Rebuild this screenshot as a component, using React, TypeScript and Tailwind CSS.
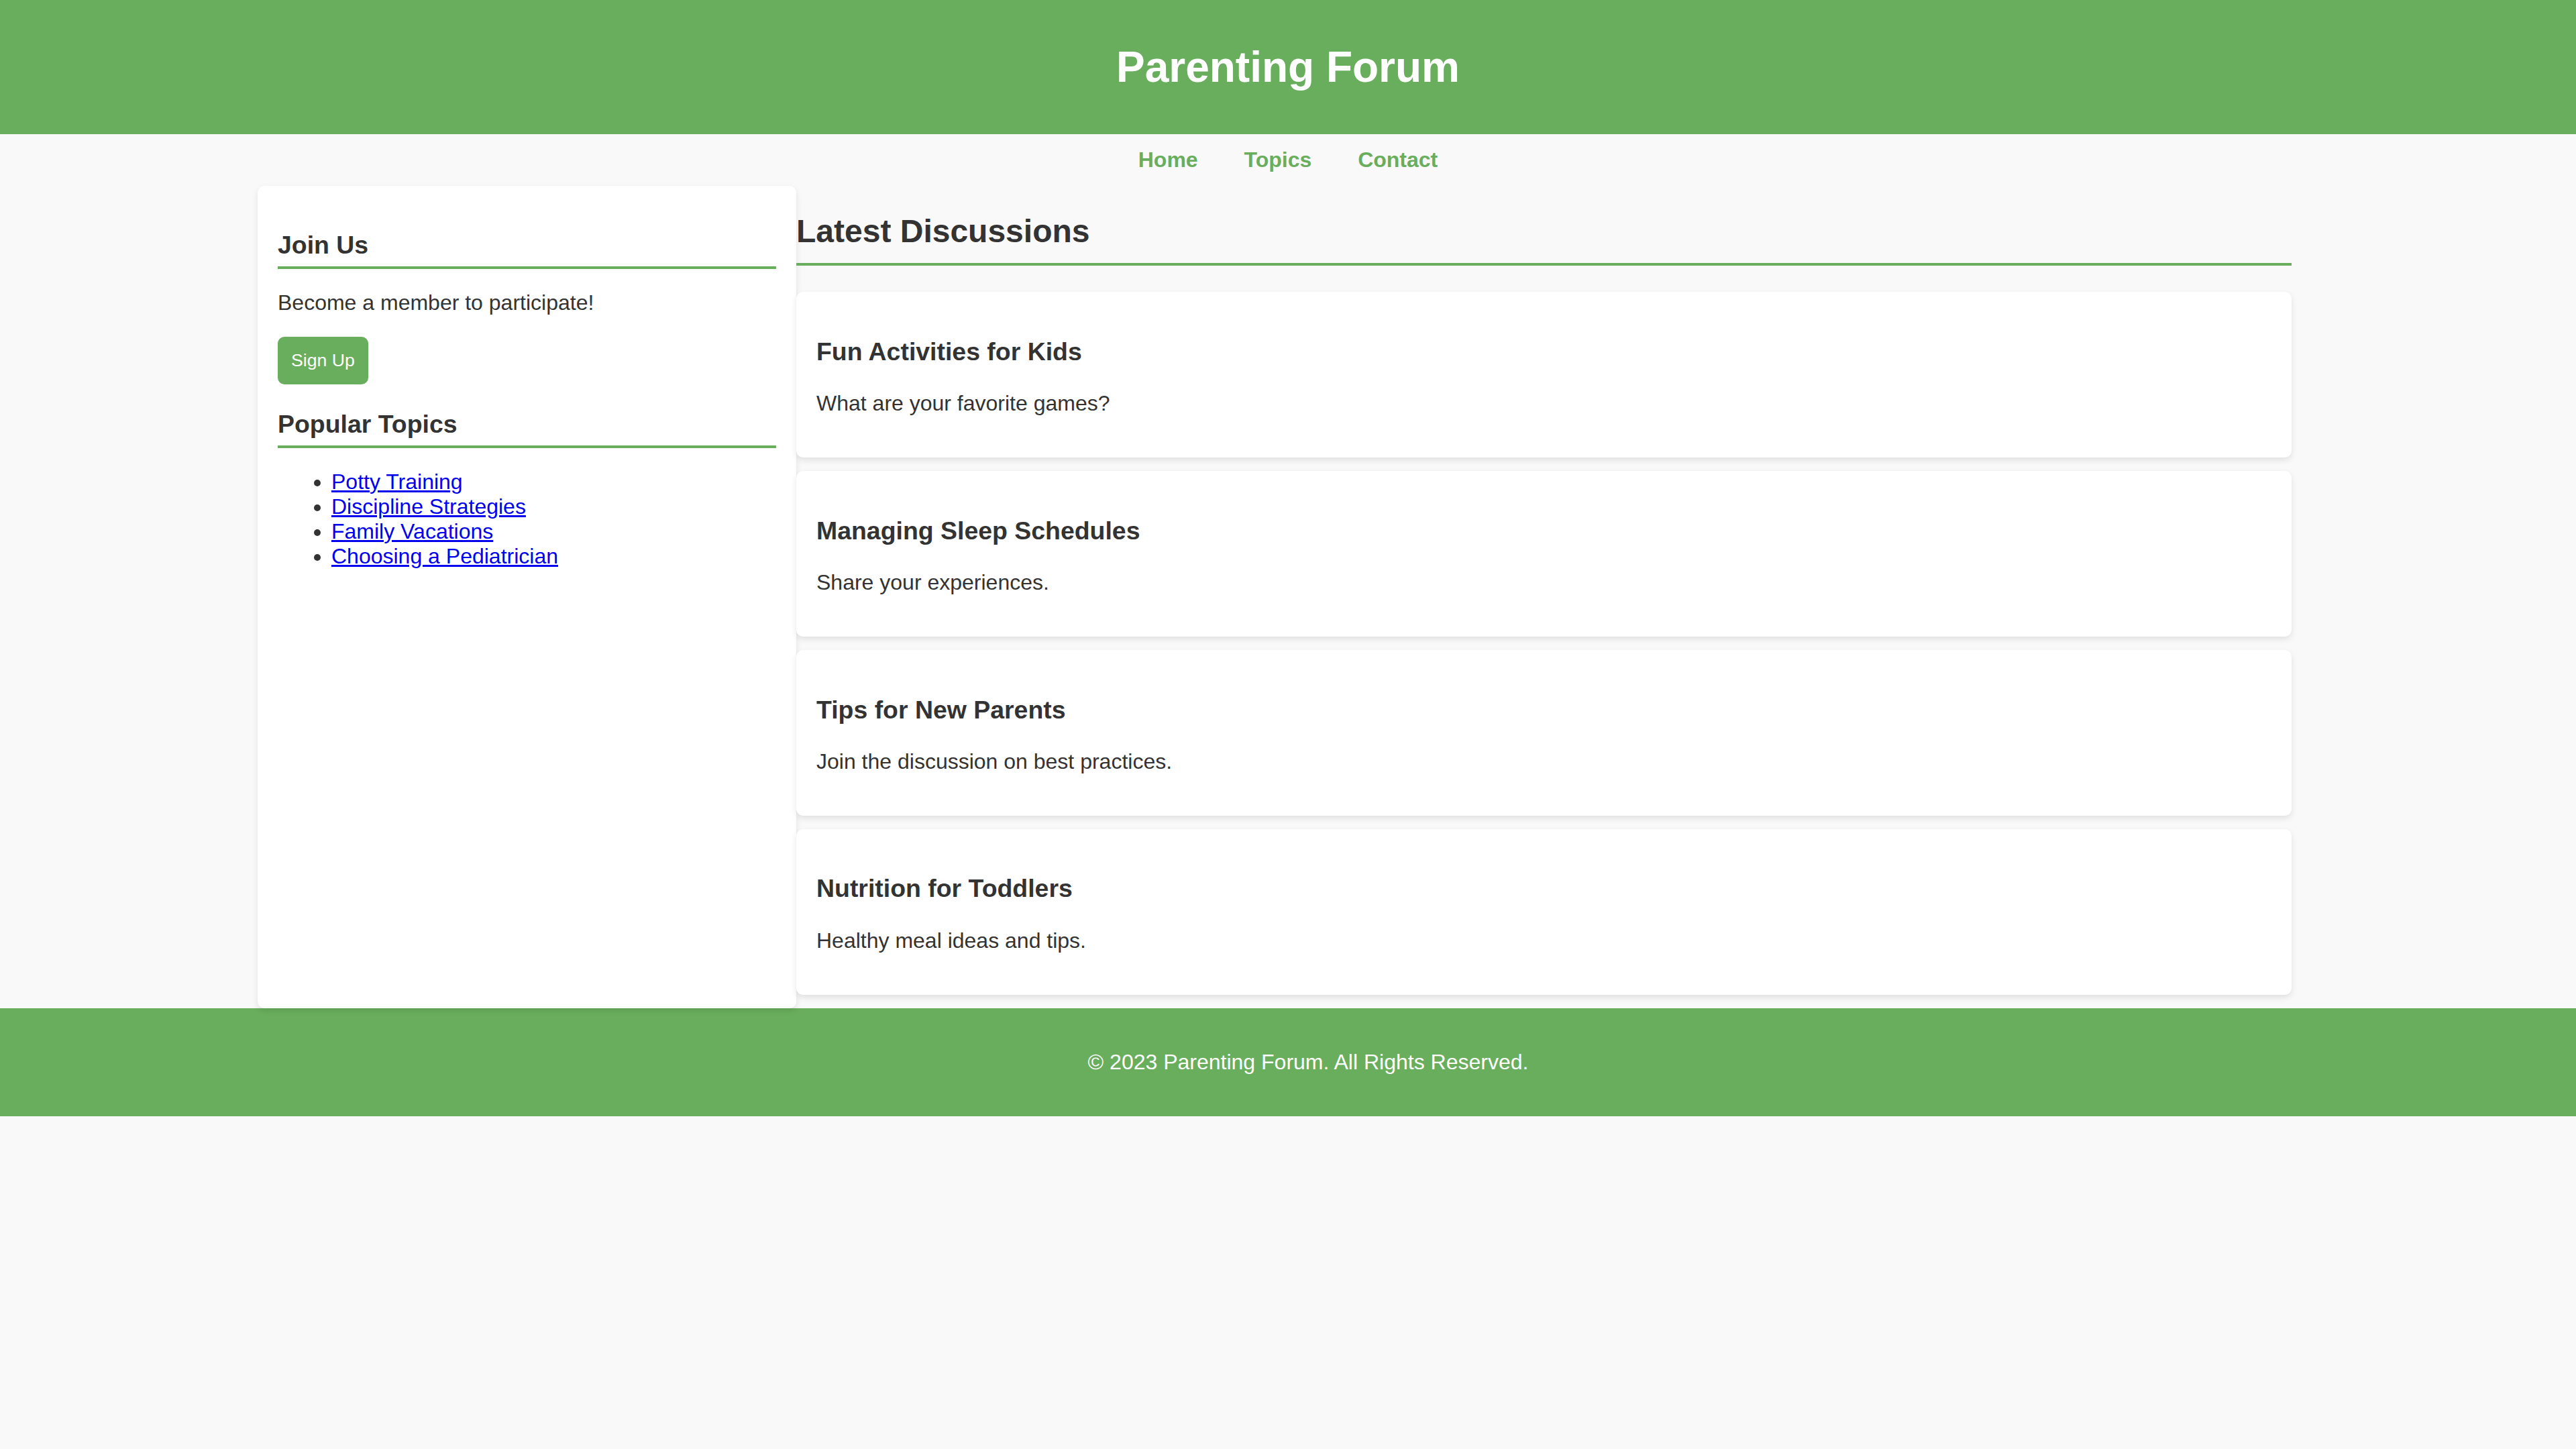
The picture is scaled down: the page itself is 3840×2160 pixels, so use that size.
const topics = ['Potty Training', 'Discipline Strategies', 'Family Vacations', 'Choosing a Pediatrician'];

const discussions = [
    { title: 'Fun Activities for Kids', text: 'What are your favorite games?' },
    { title: 'Managing Sleep Schedules', text: 'Share your experiences.' },
    { title: 'Tips for New Parents', text: 'Join the discussion on best practices.' },
    { title: 'Nutrition for Toddlers', text: 'Healthy meal ideas and tips.' },
];

const SideHeading = ({ children }: { children: string }) => (
    <h3 className="mt-[37.44px] mb-[32px] pb-[10px] border-b-[4px] border-[#69ae5d] text-[37.44px] font-bold">{children}</h3>
);

export default function App() {
    return (
        <div className="min-h-screen bg-[#f9f9f9] text-[#333] text-[32px] leading-[normal] font-['Liberation_Sans',Arial,sans-serif]">
            {/* Header */}
            <header className="bg-[#69ae5d] py-[20px] text-center">
                <h1 className="my-[42.88px] text-[64px] font-bold text-white">Parenting Forum</h1>
            </header>

            {/* Nav */}
            <nav className="py-[20px] text-center">
                <a href="#" className="mx-[30px] font-bold text-[#69ae5d]">Home</a>{' '}
                <a href="#" className="mx-[30px] font-bold text-[#69ae5d]">Topics</a>{' '}
                <a href="#" className="mx-[30px] font-bold text-[#69ae5d]">Contact</a>
            </nav>

            <div className="flex w-[3072px] mx-auto">
                {/* Sidebar */}
                <aside className="w-[803px] shrink-0 bg-white p-[30px] rounded-[10px] shadow-[0_4px_10px_rgba(0,0,0,0.1)]">
                    <SideHeading>Join Us</SideHeading>
                    <p className="mb-[32px]">Become a member to participate!</p>
                    <button className="block px-[20px] py-[20px] rounded-[10px] bg-[#69ae5d] text-white text-[26.67px] leading-[normal]">
                        Sign Up
                    </button>
                    <SideHeading>Popular Topics</SideHeading>
                    <ul className="list-disc pl-[80px] mb-[32px]">
                        {topics.map((t) => (
                            <li key={t}>
                                <a href="#" className="text-[#0000ee] underline">{t}</a>
                            </li>
                        ))}
                    </ul>
                </aside>

                {/* Main */}
                <main className="w-[2229px] shrink-0">
                    <h2 className="my-[39.84px] pb-[20px] border-b-[4px] border-[#69ae5d] text-[48px] font-bold">Latest Discussions</h2>
                    {discussions.map((d) => (
                        <div key={d.title} className="mb-[20px] p-[30px] bg-white rounded-[10px] shadow-[0_4px_10px_rgba(0,0,0,0.1)]">
                            <h3 className="my-[37.44px] text-[37.44px] font-bold">{d.title}</h3>
                            <p className="mb-[32px]">{d.text}</p>
                        </div>
                    ))}
                </main>
            </div>

            {/* Footer */}
            <footer className="bg-[#69ae5d] py-[30px] pl-[60px] text-center text-white">
                <p className="my-[32px]">© 2023 Parenting Forum. All Rights Reserved.</p>
            </footer>
        </div>
    );
}
